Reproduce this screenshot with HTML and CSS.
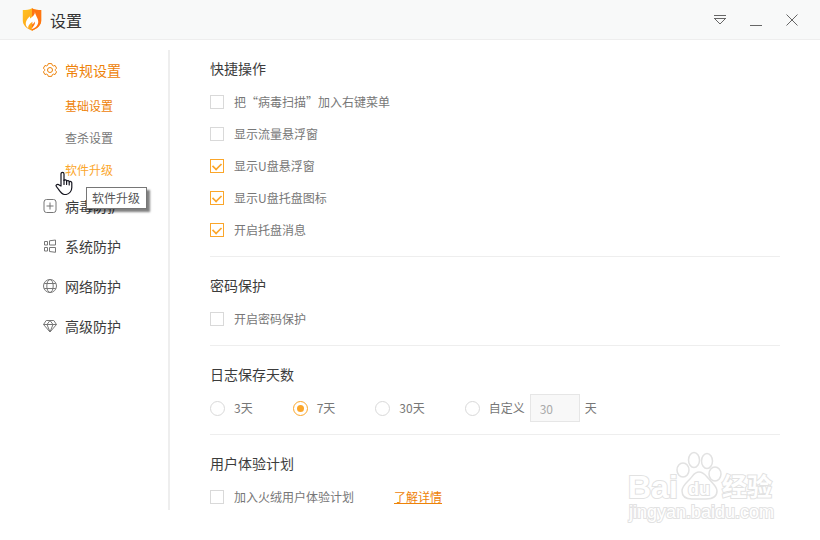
FILE: index.html
```html
<!DOCTYPE html>
<html lang="zh-CN">
<head>
<meta charset="utf-8">
<meta name="viewport" content="width=device-width, initial-scale=1">
<title>设置</title>
<link rel="stylesheet" href="styles.css">
</head>
<body>
<header class="titlebar">
  <svg class="logo" viewBox="0 0 20 23" aria-hidden="true">
    <defs>
      <linearGradient id="shield" x1="0" y1="0" x2="1" y2="1">
        <stop offset="0" stop-color="#ffc422"/>
        <stop offset="1" stop-color="#ff9212"/>
      </linearGradient>
    </defs>
    <path d="M10 .2C7.500 1.700 4 2 .8 2v10.500c0 4.500 3.500 8 9.200 10.200 5.700-2.200 9.200-5.700 9.200-10.200V2C16 2 12.500 1.700 10 .2z" fill="url(#shield)"/>
    <path d="M10 .2C12.500 1.700 16 2 19.200 2v10.500c0 4.500-3.500 8-9.200 10.200z" fill="#ff7411"/>
    <path d="M12.800 3.600c.6 3.400-2.200 4.700-4.600 7-.4-.8-.3-1.500-.1-2.300-3.500 2.700-5.300 6.500-3.700 10 .5.800 1.100 1.400 1.900 1.900-.5-3.200 2.200-4.700 3.900-6.500.4 1 .2 1.900-.2 2.900 1.200-.7 2.200-1.700 2.700-3 .9 2.700-1.200 4.700-3.200 7.400 4-.8 7.200-4.300 6.700-8.100-.4-3-2.600-4.900-3.400-9.300z" fill="#fff"/>
  </svg>
  <h1 class="title">设置</h1>
  <div class="window-buttons">
    <button type="button" aria-label="菜单"><svg viewBox="0 0 12 12"><path d="M0 1.500h12M0 4.500h12M1 5l5 5 5-5"/></svg></button>
    <button type="button" aria-label="最小化"><svg viewBox="0 0 12 12"><path d="M0 11.500h12"/></svg></button>
    <button type="button" aria-label="关闭"><svg viewBox="0 0 12 12"><path d="M.5.500l11 11M11.500.500l-11 11"/></svg></button>
  </div>
</header>
<div class="layout">
  <nav class="sidebar">
    <a class="item active" href="#general">
      <svg viewBox="0 0 14 14"><path d="M5.300 .6h3.400l.6 1.700 1.100.6 1.700-.4 1.500 2.700-1.200 1.200v1.200l1.200 1.200-1.500 2.700-1.700-.4-1.100.6-.6 1.700H5.300l-.6-1.700-1.100-.6-1.700.4L.4 8.800l1.200-1.200V6.400L.4 5.200l1.500-2.700 1.700.4 1.100-.6z"/><circle cx="7" cy="7" r="2.500"/></svg>
      常规设置</a>
    <a class="subitem active" href="#basic">基础设置</a>
    <a class="subitem" href="#scan">查杀设置</a>
    <div class="hovered">
      <a class="subitem hover" href="#update">软件升级</a>
      <svg class="pointer" viewBox="0 0 18 26" aria-hidden="true"><path d="M6 15V3c0-2.300 3-2.300 3 0v6.500c.7-1 2.500-.8 2.600.6.700-.8 2.500-.6 2.600.7.900-.7 2.600-.2 2.600 1.200v4.500c0 3.200-2.200 6.500-5.500 7H9.500c-2.800-.3-4.500-3-6.200-5.500C2.300 16.500 1 15.500 1 14.500c.6-1.700 2.500-1.400 3.500-.3z"/><path d="M9 9v4.500M11.600 10v3.500M14.200 11v3"/></svg>
      <div class="tooltip" role="tooltip">软件升级</div>
    </div>
    <a class="item" href="#virus">
      <svg viewBox="0 0 14 14"><rect x="1" y=".5" width="12" height="13" rx="2.500"/><path d="M7 3.500v7M3.500 7h7"/></svg>
      病毒防护</a>
    <a class="item" href="#system">
      <svg viewBox="0 0 14 14"><path d="M1.500 2.500h3v3.500h-3zM6.500 1.800l6-.8v5h-6zM1.500 8.500h3V12h-3zM6.500 8.500h6v4.800l-6-.8z"/></svg>
      系统防护</a>
    <a class="item" href="#network">
      <svg viewBox="0 0 14 14"><circle cx="7" cy="7" r="6.500"/><ellipse cx="7" cy="7" rx="3.200" ry="6.500"/><path d="M1.200 4.500h11.600M1.200 9.500h11.600"/></svg>
      网络防护</a>
    <a class="item" href="#advanced">
      <svg viewBox="0 0 14 14"><path d="M3.200 1.500h7.600l2.700 4L7 13 .5 5.500zM.5 5.500h13M7 1.500l-3 4L7 13l3-7.500z"/></svg>
      高级防护</a>
  </nav>
  <main class="content">
    <section class="group">
      <h2>快捷操作</h2>
      <label class="row"><input type="checkbox">把“病毒扫描”加入右键菜单</label>
      <label class="row"><input type="checkbox">显示流量悬浮窗</label>
      <label class="row"><input type="checkbox" checked>显示U盘悬浮窗</label>
      <label class="row"><input type="checkbox" checked>显示U盘托盘图标</label>
      <label class="row"><input type="checkbox" checked>开启托盘消息</label>
    </section>
    <section class="group">
      <h2>密码保护</h2>
      <label class="row"><input type="checkbox">开启密码保护</label>
    </section>
    <section class="group">
      <h2>日志保存天数</h2>
      <div class="line">
        <label class="row"><input type="radio" name="days">3天</label>
        <label class="row"><input type="radio" name="days" checked>7天</label>
        <label class="row"><input type="radio" name="days">30天</label>
        <div class="custom">
          <label class="row"><input type="radio" name="days">自定义</label>
          <input class="days" id="days" type="text" value="30" disabled>
          <label for="days">天</label>
        </div>
      </div>
    </section>
    <section class="group">
      <h2>用户体验计划</h2>
      <div class="line">
        <label class="row"><input type="checkbox">加入火绒用户体验计划</label>
        <a class="more" href="#plan">了解详情</a>
      </div>
    </section>
  </main>
</div>
<svg class="watermark" viewBox="0 0 150 74" aria-hidden="true">
  <text class="brand" x="1" y="49">Bai</text>
  <path d="M72 23c-5 0-6 4-9 7-4 4-8 7-8 12 0 6 5 8 10 8h14c6 0 11-2 11-8 0-5-5-8-8-12-3-3-5-7-10-7z"/>
  <ellipse cx="56" cy="21" rx="6" ry="7"/><ellipse cx="67" cy="11" rx="5.500" ry="7.500"/><ellipse cx="80" cy="12" rx="5.500" ry="7.500"/><ellipse cx="88" cy="25" rx="6" ry="7"/>
  <text class="du" x="61" y="46">du</text>
  <text class="cjk" x="95" y="47">经验</text>
  <text class="url" x="2" y="69">jingyan.baidu.com</text>
</svg>
</body>
</html>
```
FILE: styles.css
```css
* {
  box-sizing: border-box;
}

body {
  margin: 0;
  min-height: 100vh;
  position: relative;
  display: flex;
  flex-direction: column;
  background: #fff;
  color: #777;
  font: 12px/20px "Noto Sans CJK SC", sans-serif;
}

h1,
h2 {
  margin: 0;
  font-weight: 400;
}

a {
  color: inherit;
  text-decoration: none;
}

.titlebar {
  display: flex;
  align-items: center;
  height: 40px;
  padding: 0 10px 0 22px;
  background: #f8f9f9;
  border-bottom: 1px solid #eee;
}

.logo {
  width: 20px;
  height: 23px;
  margin-right: 8px;
}

.title {
  font-size: 16px;
  line-height: 24px;
  color: #333;
}

.window-buttons {
  display: flex;
  margin-left: auto;
}

.window-buttons button {
  width: 36px;
  height: 38px;
  padding: 0;
  border: 0;
  background: none;
  display: grid;
  place-items: center;
}

.window-buttons svg {
  width: 12px;
  height: 12px;
  fill: none;
  stroke: #666;
}

.layout {
  flex: 1;
  display: flex;
}

.sidebar {
  flex: 0 0 170px;
  margin: 10px 0 30px;
  border-right: 2px solid #eee;
}

.item {
  display: flex;
  align-items: center;
  gap: 8px;
  height: 40px;
  padding-left: 43px;
  font-size: 14px;
  color: #3c3c3c;
}

.item svg {
  width: 14px;
  height: 14px;
  fill: none;
  stroke: #777;
}

.subitem {
  display: block;
  padding-left: 65px;
  line-height: 32px;
}

.item.active,
.subitem.active {
  color: #ee8208;
}

.item.active svg {
  stroke: #ee8208;
}

.subitem.hover {
  color: #fba62a;
}

.hovered {
  position: relative;
}

.pointer {
  position: absolute;
  top: 17px;
  left: 55px;
  z-index: 3;
  width: 18px;
  height: 26px;
  fill: #fff;
  stroke: #15151f;
  stroke-width: 1.2;
  stroke-linejoin: round;
  stroke-linecap: round;
}

.tooltip {
  position: absolute;
  top: 33px;
  left: 86px;
  z-index: 2;
  padding: 0 6px 0 5px;
  border: 1px solid #767676;
  background: #fff;
  color: #575757;
  white-space: nowrap;
  box-shadow: 3px 3px 2px rgba(0, 0, 0, 0.5);
}

.content {
  flex: 1;
  margin: 0 40px;
}

.group {
  padding: 15px 0 10px;
  border-bottom: 1px solid #eee;
}

.group:last-child {
  border-bottom: 0;
}

.group h2 {
  margin-bottom: 5px;
  font-size: 14px;
  line-height: 26px;
  color: #3c3c3c;
}

.row {
  display: flex;
  align-items: center;
  gap: 10px;
  height: 32px;
}

.row input {
  appearance: none;
  flex: none;
  width: 14px;
  height: 14px;
  margin: 0;
  border: 1px solid #d9d9d9;
  background: #fff;
  display: grid;
  place-items: center;
}

.row input:checked {
  border-color: #fba62a;
}

.row input[type="checkbox"]:checked::before {
  content: "";
  width: 8px;
  height: 5px;
  margin-bottom: 2px;
  border: solid #fba62a;
  border-width: 0 0 2px 2px;
  transform: rotate(-45deg) scale(0.85);
}

.row input[type="radio"] {
  width: 15px;
  height: 15px;
  border-radius: 50%;
}

.row input[type="radio"]:checked::before {
  content: "";
  width: 7px;
  height: 7px;
  border-radius: 50%;
  background: #fba62a;
}

.line {
  display: flex;
  align-items: center;
  gap: 40px;
}

.line .row:has([type="radio"]) {
  gap: 9px;
}

.custom {
  display: flex;
  align-items: center;
  gap: 5px;
}

.days {
  width: 50px;
  height: 28px;
  padding: 0 9px;
  border: 1px solid #e6e6e6;
  background: #f8f8f8;
  color: #aaa;
  font: inherit;
}

.more {
  color: #ee8208;
  text-decoration: underline;
}

.watermark {
  position: absolute;
  right: 43px;
  bottom: 17px;
  width: 150px;
  height: 74px;
  fill: #fff;
  stroke: #e2e2e2;
  stroke-width: 1.5;
  pointer-events: none;
}

.watermark text {
  font-family: "Liberation Sans", "Noto Sans CJK SC", sans-serif;
  stroke-width: 2px;
  paint-order: stroke;
}

.watermark .brand {
  font-size: 32px;
  font-weight: 700;
}

.watermark .du {
  font-size: 18px;
  font-weight: 700;
}

.watermark .cjk {
  font-size: 25px;
  font-weight: 700;
}

.watermark .url {
  font-size: 18px;
}
```
